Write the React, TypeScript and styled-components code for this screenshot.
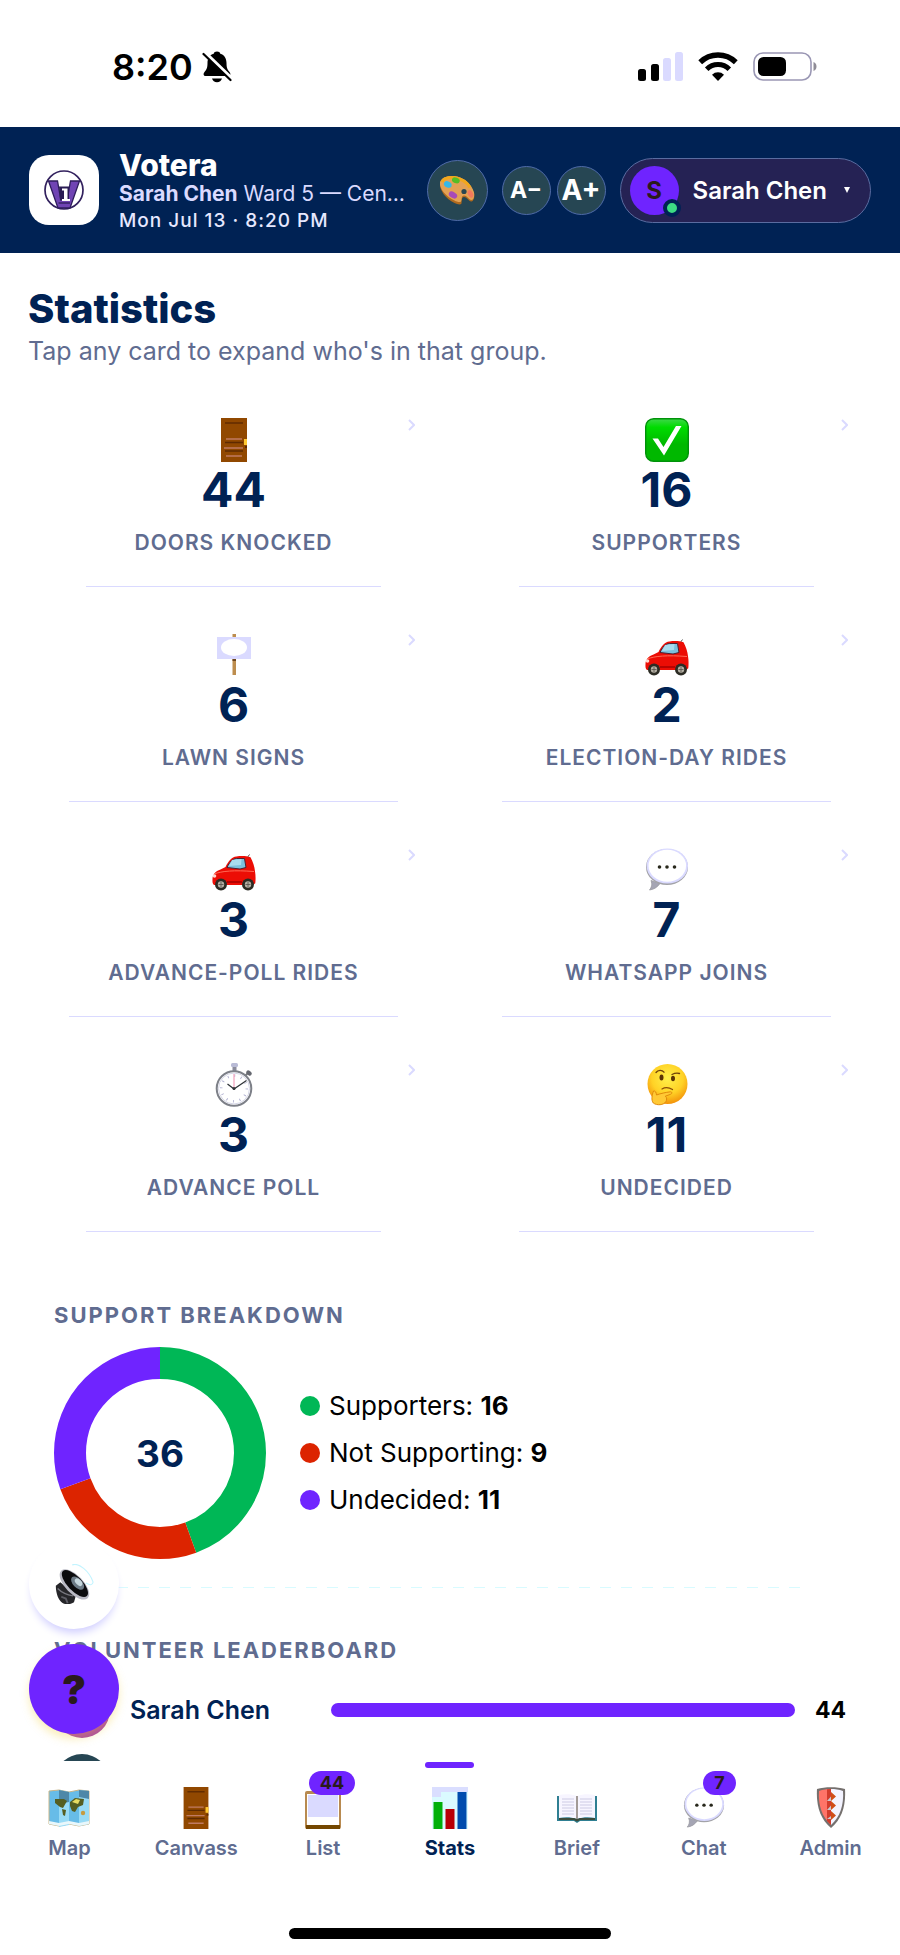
import React from "react";
import styled, { createGlobalStyle } from "styled-components";

const GlobalStyle = createGlobalStyle`
  :root {
    --navy: #002254;
    --violet: #6f24ff;
    --muted: #606c90;
    --lavender: #dadaff;
    --ink: #2a1a1c;
    --slate: #264653;
  }

  * {
    box-sizing: border-box;
  }

  body {
    margin: 0;
    background: white;
    font-family: Inter, "Liberation Sans", sans-serif;
  }

  button {
    font-family: inherit;
    padding: 0;
    border: none;
    background: none;
    cursor: pointer;
  }

  svg {
    display: block;
    flex-shrink: 0;
  }
`;

const Shell = styled.div`
  height: 100vh;
  display: flex;
  flex-direction: column;
  overflow: hidden;
`;

const StatusBar = styled.div`
  display: flex;
  align-items: center;
  justify-content: space-between;
  flex-shrink: 0;
  height: 127px;
  padding: 6px 82px 0 112px;
`;

const StatusGroup = styled.div<{ $gap: number }>`
  display: flex;
  align-items: center;
  gap: ${props => props.$gap}px;
`;

const Clock = styled.span`
  font-size: 36px;
  font-weight: 600;
  line-height: 40px;
`;

const Header = styled.header`
  display: flex;
  align-items: center;
  flex-shrink: 0;
  height: 126px;
  padding: 0 29px;
  background: var(--navy);
  color: white;
`;

const LogoTile = styled.div`
  display: flex;
  align-items: center;
  justify-content: center;
  flex-shrink: 0;
  width: 70px;
  height: 70px;
  border-radius: 20px;
  background: white;
`;

const Identity = styled.div`
  flex: 1;
  min-width: 0;
  padding: 3px 0 0 20px;
  white-space: nowrap;
`;

const AppName = styled.div`
  font-size: 30px;
  font-weight: 800;
  line-height: 30px;
`;

const Assignment = styled.div`
  font-size: 21px;
  line-height: 28px;
  color: var(--lavender);
`;

const DateLine = styled.div`
  font-size: 19px;
  font-weight: 500;
  line-height: 26px;
  letter-spacing: 1px;
  color: #e6e8ff;
`;

const RoundButton = styled.button<{ $size: number; $font?: number }>`
  display: flex;
  align-items: center;
  justify-content: center;
  flex-shrink: 0;
  width: ${props => props.$size}px;
  height: ${props => props.$size}px;
  border: 1px solid #4f6ba8;
  border-radius: 50%;
  background: var(--slate);
  color: white;
  font-size: ${props => props.$font || 20}px;
  font-weight: 700;
`;

const HeaderTools = styled.div`
  display: flex;
  align-items: center;
  gap: 14px;
`;

const FontSizeTools = styled.div`
  display: flex;
  gap: 6px;
`;

const ProfileButton = styled.button`
  display: flex;
  align-items: center;
  height: 65px;
  padding: 0 20px 0 9px;
  border: 1px solid #5a6ca0;
  border-radius: 33px;
  background: #252254;
  color: white;
  font-size: 24px;
  font-weight: 600;
  white-space: nowrap;
`;

const Avatar = styled.span`
  position: relative;
  display: flex;
  align-items: center;
  justify-content: center;
  width: 49px;
  height: 49px;
  margin-right: 14px;
  border-radius: 50%;
  background: var(--violet);
  color: var(--ink);
  font-weight: 700;
`;

const OnlineDot = styled.span`
  position: absolute;
  right: -2px;
  bottom: -2px;
  width: 18px;
  height: 18px;
  border: 4px solid var(--navy);
  border-radius: 50%;
  background: #3ddc84;
`;

const Caret = styled.span`
  width: 6px;
  height: 6px;
  margin-left: 17px;
  background: white;
  clip-path: polygon(0 0, 100% 0, 50% 100%);
`;

const Main = styled.main`
  flex: 1;
  min-height: 0;
  padding: 32px 28px 0;
  overflow-y: auto;
  scrollbar-width: none;
`;

const Title = styled.h1`
  margin: 0;
  font-size: 40px;
  font-weight: 800;
  line-height: 48px;
  color: var(--navy);
`;

const Subtitle = styled.p`
  margin: 2px 0 27px;
  font-size: 25px;
  line-height: 32px;
  color: var(--muted);
`;

const CardGrid = styled.div`
  display: grid;
  grid-template-columns: 1fr 1fr;
  gap: 22px;
`;

const Card = styled.button`
  position: relative;
  display: flex;
  flex-direction: column;
  align-items: center;
  padding-top: 24px;
`;

const Chevron = styled.svg`
  position: absolute;
  top: 25px;
  right: 24px;
`;

const CardValue = styled.span`
  margin-top: 2px;
  font-size: 48px;
  font-weight: 700;
  line-height: 52px;
  color: var(--navy);
`;

const CardLabel = styled.span`
  margin-top: 15px;
  font-size: 21px;
  font-weight: 600;
  line-height: 24px;
  letter-spacing: 1px;
  text-transform: uppercase;
  color: var(--muted);
`;

const CardRule = styled.span<{ $wide?: boolean }>`
  width: ${props => props.$wide ? "80%" : "72%"};
  height: 1px;
  margin-top: 31px;
  background: var(--lavender);
`;

const Panel = styled.section<{ $top: number }>`
  margin-top: ${props => props.$top}px;
  padding: 26px 26px 28px;
`;

const PanelDivider = styled.div`
  height: 1px;
  margin: 0 72px 0 26px;
  background: repeating-linear-gradient(to right, #d8fbff 0 11px, transparent 11px 21px);
`;

const PanelTitle = styled.h2`
  margin: 0 0 18px;
  font-size: 22px;
  font-weight: 700;
  line-height: 28px;
  letter-spacing: 2px;
  text-transform: uppercase;
  color: var(--muted);
`;

const Breakdown = styled.div`
  display: flex;
  align-items: center;
  gap: 34px;
`;

const Legend = styled.ul`
  display: grid;
  gap: 15px;
  margin: 0;
  padding: 0;
  list-style: none;
`;

const LegendItem = styled.li<{ $color: string }>`
  display: flex;
  align-items: center;
  gap: 9px;
  font-size: 26px;
  line-height: 32px;

  &::before {
    content: "";
    width: 20px;
    height: 20px;
    border-radius: 50%;
    background: ${props => props.$color};
  }
`;

const LeaderRow = styled.div`
  display: flex;
  align-items: center;
  gap: 20px;
  height: 56px;
  margin-bottom: 16px;
`;

const Rank = styled.span<{ $color: string }>`
  flex-shrink: 0;
  width: 56px;
  height: 56px;
  border-radius: 50%;
  background: ${props => props.$color};
`;

const LeaderName = styled.span`
  width: 181px;
  font-size: 25px;
  font-weight: 600;
  color: var(--navy);
`;

const Track = styled.div`
  flex: 1;
  height: 14px;
`;

const Fill = styled.div`
  height: 100%;
  border-radius: 7px;
  background: var(--violet);
`;

const LeaderCount = styled.span`
  font-size: 23px;
  font-weight: 700;
`;

const BottomArea = styled.footer`
  position: relative;
  flex-shrink: 0;
  background: white;
`;

const FloatingActions = styled.div`
  position: absolute;
  left: 29px;
  bottom: 100%;
  display: grid;
  gap: 15px;
  padding-bottom: 27px;
`;

const FloatingButton = styled.button<{ $primary?: boolean }>`
  display: flex;
  align-items: center;
  justify-content: center;
  width: 90px;
  height: 90px;
  border-radius: 50%;
  background: ${props => props.$primary ? "var(--violet)" : "white"};
  box-shadow: ${props => props.$primary ? "0 5px 8px rgba(240, 205, 60, 0.35)" : "0 7px 8px -3px #d0ceff"};
  color: var(--ink);
  font-size: 40px;
  font-weight: 900;
`;

const Tabs = styled.nav`
  display: grid;
  grid-template-columns: repeat(7, 1fr);
  padding: 1px 6px 0;
`;

const Tab = styled.button<{ $active?: boolean }>`
  display: flex;
  flex-direction: column;
  align-items: center;
  font-size: 20px;
  font-weight: ${props => props.$active ? 700 : 600};
  line-height: 24px;
  color: ${props => props.$active ? "var(--navy)" : "var(--muted)"};

  &::before {
    content: "";
    width: 49px;
    height: 6px;
    border-radius: 3px;
    background: ${props => props.$active ? "var(--violet)" : "transparent"};
  }
`;

const TabIcon = styled.span`
  position: relative;
  margin: 19px 0 7px;
`;

const Badge = styled.span`
  position: absolute;
  top: -16px;
  right: -11px;
  min-width: 32px;
  padding: 0 11px;
  border-radius: 12px;
  background: var(--violet);
  color: var(--ink);
  font-size: 18px;
  font-weight: 700;
  line-height: 24px;
`;

const HomeIndicator = styled.div`
  width: 322px;
  height: 11px;
  margin: 68px auto 16px;
  border-radius: 6px;
  background: black;
`;

type IconProps = { size: number };

const DoorIcon = ({ size }: IconProps) => (
  <svg width={size} height={size} viewBox="0 0 44 44">
    <rect x="9" width="26" height="44" fill="#914800" />
    <path d="M13 5h18" stroke="#5e2a00" strokeWidth="1.4" />
    <path d="M14 21h16M12 30h19M14 38h16" stroke="#c07a62" strokeWidth="1.4" />
    <path d="M13 24.500h18M13 33h18" stroke="#5e2a00" strokeWidth="1.4" />
    <rect x="32" y="21" width="3" height="6" fill="#ffc933" />
    <rect x="33" y="28" width="2" height="2" fill="#5e2a00" />
  </svg>
);

const CheckIcon = ({ size }: IconProps) => (
  <svg width={size} height={size} viewBox="0 0 44 44">
    <defs>
      <linearGradient id="check-bg" x2="0" y2="1">
        <stop offset="0" stopColor="#3fd84a" />
        <stop offset="0.2" stopColor="#00dc00" />
        <stop offset="0.6" stopColor="#00b800" />
      </linearGradient>
    </defs>
    <rect x="0.700" y="0.700" width="42.600" height="42.600" rx="8" fill="url(#check-bg)" stroke="#00920a" strokeWidth="1.4" />
    <path d="M7.500 20.500h5.500l5.500 8.500L31 8h5.500L19 37.500z" fill="white" />
  </svg>
);

const SignIcon = ({ size }: IconProps) => (
  <svg width={size} height={size} viewBox="0 0 44 44">
    <rect x="20.500" y="1" width="3.500" height="41" fill="#bd8d4e" />
    <rect x="5" y="4" width="34" height="22" fill="#dadaff" />
    <ellipse cx="22" cy="14.500" rx="13" ry="8.500" fill="white" />
    <path d="M20.500 26h3.500v2h-3.500z" fill="#6b4520" />
  </svg>
);

const CarIcon = ({ size }: IconProps) => (
  <svg width={size} height={size} viewBox="0 0 44 44">
    <path d="M35 10l2.500-3.500" stroke="#555" strokeWidth="1" />
    <path d="M0.500 31c0-4 3-8 8-9.500l5-2.500c3-6 6-10 11-10.500 5-.7 10-.5 14 .8 2.500 5 4 9 4.500 14 .7 4 .7 8 .3 12L41 37H2c-1.500-1-1.700-3-1.500-6z" fill="#ec0d05" />
    <path d="M15 19.500c2.500-5.500 5.500-8.500 9.500-9h8l1.500 9-6 1.500z" fill="#7cc0dc" stroke="#4a2030" strokeWidth="1" />
    <path d="M20 12l-3 6 12-1 .5-6z" fill="#a9dcee" />
    <path d="M2 26c8-3 20-4 40-2.500" fill="none" stroke="#ff6a55" strokeWidth="1" />
    <path d="M15 34h15" stroke="#a60000" strokeWidth="1.500" />
    <circle cx="2.500" cy="28" r="1.800" fill="#ffd9d0" />
    <circle cx="9" cy="36.500" r="6" fill="#2c2c24" />
    <circle cx="9" cy="36.500" r="3.200" fill="#b4b0a4" />
    <circle cx="36" cy="36.500" r="6" fill="#2c2c24" />
    <circle cx="36" cy="36.500" r="3.200" fill="#b4b0a4" />
    <path d="M9 34v5M6.500 36.500h5M36 34v5M33.500 36.500h5" stroke="#55504a" strokeWidth="0.800" />
  </svg>
);

const ChatIcon = ({ size }: IconProps) => (
  <svg width={size} height={size} viewBox="0 0 44 44">
    <path d="M6 32.500c1.500 4 .5 7-1.500 9.500 4.500-.5 8-3 10.500-6.500z" fill="#a5a5b4" stroke="#99999f" strokeWidth="0.800" />
    <ellipse cx="22" cy="19" rx="21" ry="18" fill="#a3a3a8" />
    <ellipse cx="22.300" cy="18" rx="20.700" ry="17.600" fill="#dadaff" />
    <ellipse cx="22.300" cy="17.700" rx="18.800" ry="16" fill="white" />
    <circle cx="14.500" cy="19" r="1.800" fill="#28281c" />
    <circle cx="22" cy="19" r="1.800" fill="#28281c" />
    <circle cx="29.500" cy="19" r="1.800" fill="#28281c" />
  </svg>
);

const StopwatchIcon = ({ size }: IconProps) => (
  <svg width={size} height={size} viewBox="0 0 44 44">
    <rect x="19" y="0" width="7" height="4" rx="1.500" fill="#b9bbd6" />
    <rect x="20.500" y="4" width="4" height="4" fill="#8b8c9c" />
    <path d="M33 13l4-4" stroke="#77787c" strokeWidth="2" />
    <rect x="34" y="8" width="6" height="4" rx="2" transform="rotate(40 37 10)" fill="#666870" />
    <circle cx="22" cy="25.500" r="17.300" fill="white" stroke="#7d8088" strokeWidth="2" />
    <circle cx="22" cy="25.500" r="15.500" fill="none" stroke="#d5d6e6" strokeWidth="1" />
    <circle cx="22" cy="25.500" r="12.800" fill="none" stroke="#b2b2d2" strokeWidth="2.600" strokeDasharray="0.900 5.800" />
    <path d="M22 11v15" stroke="#f4a0bd" strokeWidth="1.200" />
    <path d="M15.500 21l6.500 5 12.500-8.500" fill="none" stroke="#303438" strokeWidth="1.300" />
    <circle cx="22" cy="25.500" r="1.500" fill="#303438" />
  </svg>
);

const ThinkingIcon = ({ size }: IconProps) => (
  <svg width={size} height={size} viewBox="0 0 44 44">
    <defs>
      <radialGradient id="face" cx="0.500" cy="0.350" r="0.650">
        <stop offset="0" stopColor="#fff04a" />
        <stop offset="0.600" stopColor="#ffd226" />
        <stop offset="1" stopColor="#f3920a" />
      </radialGradient>
    </defs>
    <circle cx="22.500" cy="21" r="20" fill="url(#face)" />
    <path d="M11 9.500c2-2.800 6-3 8-.3M27 11.500c2.500-1.300 5-1.700 7.500-1" fill="none" stroke="#70420a" strokeWidth="1.300" strokeLinecap="round" />
    <ellipse cx="16.500" cy="14.500" rx="2" ry="3" fill="#5c3304" />
    <ellipse cx="28" cy="15.500" rx="2" ry="2.800" fill="#5c3304" />
    <path d="M17 26c3-1.800 7-1.600 10.500.6" fill="none" stroke="#8a4c08" strokeWidth="1.200" strokeLinecap="round" />
    <path d="M8.500 28c2-.5 2.700 1.500 3 4 4-1.500 9-2.600 14-3.200 2 .3 1.700 2-.2 2.600l-5 1.800c2 1.500 1.500 4 .5 5.500-2 3.500-9 4-12.500 1.300C6 37 7 32 8.500 28z" fill="#ffc935" stroke="#e08a0a" strokeWidth="1" />
  </svg>
);

const PaletteIcon = ({ size }: IconProps) => (
  <svg width={size} height={size} viewBox="0 0 36 36">
    <path d="M1 11C2 6 8 4 15 4.500c9 .8 18 8 20 16.500 1 4-.5 8.500-2.500 8.500-3 .2-4-4.500-7.500-4.500-3 .2-2 4.500-2.500 6.500-1 1.500-4 1-7-.5C7 27 0 18 1 11z" fill="#b06a1e" />
    <path d="M1 10.500C2 5.500 8 3.500 15 4c9 .8 18 8 20 16.500.7 4-.5 7.500-2.500 7.500-3 0-4-4.500-7.500-4.500-3 .2-2 4.500-3 6-1 1-4 .5-6.500-1C8 25 0 17 1 10.500z" fill="#e3a155" />
    <path d="M3 10C5 6 9 5 15 5.500c7 1 13 5 16 10" fill="none" stroke="#f2a71c" strokeWidth="3" />
    <ellipse cx="9" cy="12.500" rx="4" ry="3" transform="rotate(25 9 12)" fill="#35b8e8" />
    <ellipse cx="17" cy="8.500" rx="4" ry="2.800" transform="rotate(20 17 8)" fill="#55be26" />
    <ellipse cx="14" cy="23" rx="4.500" ry="3" transform="rotate(30 14 23)" fill="#a84ab8" />
    <ellipse cx="31.500" cy="22" rx="2.500" ry="4" transform="rotate(-25 31 22)" fill="#f2795c" />
    <circle cx="25" cy="19.500" r="2.600" fill="#2a4650" />
  </svg>
);

const SpeakerIcon = ({ size }: IconProps) => (
  <svg width={size} height={size} viewBox="0 0 44 44">
    <path d="M2 24l5-4 17 15-2 7c-4 3-10 3-13 .5-4-2.500-7-10-7-18.500z" fill="#26262a" />
    <path d="M4 27c5 5 10 7 17 8" fill="none" stroke="#77777f" strokeWidth="1.500" />
    <path d="M8 36l5 2 2 5" fill="none" stroke="#5e5e66" strokeWidth="2" />
    <ellipse cx="22.500" cy="22.500" rx="21" ry="10" transform="rotate(46 22.500 22.500)" fill="#b9b9c4" />
    <ellipse cx="23" cy="21.500" rx="19" ry="8" transform="rotate(46 23 21.500)" fill="#0b0b0e" />
    <ellipse cx="26" cy="21" rx="9" ry="5" transform="rotate(46 26 21)" fill="#6c7a86" />
    <ellipse cx="27" cy="20" rx="5" ry="3" transform="rotate(46 27 20)" fill="#c5d6dd" />
    <path d="M20 1c7-3 19 7 23 19-1 5-5 2-8 1" fill="none" stroke="#c3f4ff" strokeWidth="1.200" />
  </svg>
);

const MapIcon = ({ size }: IconProps) => (
  <svg width={size} height={size} viewBox="0 0 42 42">
    <path d="M1 4l10-1 10 2 10-2 10 1v33l-10 2-10-2-10 2-10-2z" fill="#67bce8" stroke="#c8b68a" strokeWidth="1" />
    <path d="M11 3l10 2v33l-10 2zM31 3l10 1v33l-10 2z" fill="#98dbf6" />
    <path d="M11 3l10 2v10l-10 2zM31 3l10 1v8l-10-2z" fill="#4e88a8" />
    <path d="M7 12l9 0 3 2-4 7-3-1-5-4zM14 22l4 1-1 6-2-1zM22 15l5-4 9 1-1 6-5 2-3 5-3-1-2-5z" fill="#555e21" />
    <path d="M24 15l4-3 4 1-2 4z" fill="#e7dc62" />
    <circle cx="35" cy="26" r="2.200" fill="#c69b40" />
    <path d="M1 34l10 2 10-2 10 2 10-2v3l-10 2-10-2-10 2-10-2z" fill="#e9f7fb" />
  </svg>
);

const ClipboardIcon = ({ size }: IconProps) => (
  <svg width={size} height={size} viewBox="0 0 42 42">
    <rect x="3" y="4" width="36" height="38" rx="2" fill="#b88a50" />
    <path d="M4 38h34v4H4z" fill="#744700" />
    <rect x="5" y="7" width="32" height="31" fill="white" />
    <rect x="6" y="8" width="30" height="22" fill="#dadaff" />
  </svg>
);

const ChartIcon = ({ size }: IconProps) => (
  <svg width={size} height={size} viewBox="0 0 42 42">
    <rect x="3" width="36" height="42" fill="#dafaff" />
    <path d="M3 0h36v5H12v5H3z" fill="#dadeff" />
    <rect x="4.500" y="15" width="9" height="27" fill="#00b00a" />
    <rect x="16.500" y="22" width="9" height="20" fill="#b80006" />
    <rect x="28.500" y="5" width="9" height="37" fill="#004cae" />
  </svg>
);

const BookIcon = ({ size }: IconProps) => (
  <svg width={size} height={size} viewBox="0 0 42 42">
    <path d="M1 9h40v25H24l-3 2-3-2H1z" fill="#2f7f92" />
    <path d="M3 8c6-1 12-1 18 1 6-2 12-2 18-1v23c-6-1-12-1-18 1-6-2-12-2-18-1z" fill="#f7f5ff" />
    <path d="M6 12h12M6 15h12M6 18h12M6 21h12M6 24h12M6 27h12M24 12h12M24 15h12M24 18h12M24 21h12M24 24h12M24 27h12" stroke="#cdcbe4" strokeWidth="1" />
    <path d="M21 9v24" stroke="#877c74" strokeWidth="1.500" />
    <path d="M3 32h15l3 1.500 3-1.500h15" fill="none" stroke="#3c4c3c" strokeWidth="2" />
  </svg>
);

const ShieldIcon = ({ size }: IconProps) => (
  <svg width={size} height={size} viewBox="0 0 42 42">
    <path d="M7 2c8-2.500 20-2.500 28 0 1 16-3 30-14 39C10 32 6 18 7 2z" fill="#75706e" />
    <path d="M9 4c4-1.500 8-2 12-2v36C12 30 8 18 9 4z" fill="#ff7468" />
    <path d="M17 2.300l4-.3v36l-4-4z" fill="#d23c2c" />
    <path d="M21 2c4 0 8 .5 12 2 1 14-3 26-12 34z" fill="#f3f3ff" />
    <path d="M21 5l5 4.500-5 4.500zM21 14l5 4.500-5 4.500zM21 24l5 4.500-5 4.500z" fill="#d04e18" />
    <path d="M21 9.500l-4 4.500 4 0zM21 18.500l-4 4.500 4 0zM21 29l-4 3 4 0z" fill="#c9c9d0" />
  </svg>
);

const VoteraLogo = () => (
  <svg width="40" height="40" viewBox="0 0 40 40">
    <circle cx="20" cy="20" r="19" fill="white" stroke="#32215e" strokeWidth="1.700" />
    <path d="M4.500 11h9l3 17h7l3-17h9L26 38H14z" fill="#7044b4" stroke="#2e1d5c" strokeWidth="1.300" />
    <path d="M15 16.500h10v14h-9z" fill="#2a1c54" />
    <path d="M18 18.500h5.500V29H26v2h-8v-2h2V20.500h-2z" fill="white" />
    <path d="M14.500 33h11.500" stroke="#2e1d5c" strokeWidth="1.300" />
  </svg>
);

const MutedBell = () => (
  <svg width="30" height="32" viewBox="0 0 30 32">
    <path d="M15 0.500c1.800 0 3 .9 3.300 2.200 4.200 1.300 6.200 4.800 6.200 9.300 0 4.500.8 6.500 3 9 1.600 1.900 1 4-1.200 4H3.700c-2.200 0-2.800-2.100-1.200-4 2.200-2.500 3-4.500 3-9 0-4.500 2-8 6.200-9.300C12 1.400 13.200.5 15 .5zM10 27.500h10c-.7 2.300-2.500 3.700-5 3.700s-4.300-1.400-5-3.700z" fill="black" />
    <path d="M2.500 1.500l27 26" stroke="white" strokeWidth="4" />
    <path d="M1.500 3l27 26" stroke="black" strokeWidth="2.200" strokeLinecap="round" />
  </svg>
);

const SignalIcon = () => (
  <svg width="45" height="29" viewBox="0 0 45 29">
    <rect y="17" width="8" height="12" rx="2.500" fill="black" />
    <rect x="13" y="12" width="8" height="17" rx="2.500" fill="black" />
    <rect x="25" y="6" width="8" height="23" rx="2.500" fill="#dadaff" />
    <rect x="37" width="8" height="29" rx="2.500" fill="#dadaff" />
  </svg>
);

const WifiIcon = () => (
  <svg width="40" height="29" viewBox="0 0 40 29">
    <path d="M2.200 10.300a25.500 25.500 0 0 1 35.600 0" fill="none" stroke="black" strokeWidth="5.400" />
    <path d="M8.700 17.200a16 16 0 0 1 22.600 0" fill="none" stroke="black" strokeWidth="5" />
    <path d="M20 29l-6-6.300a8.800 8.800 0 0 1 12 0z" fill="black" />
  </svg>
);

const BatteryIcon = () => (
  <svg width="65" height="29" viewBox="0 0 65 29">
    <rect x="1" y="1" width="57" height="27" rx="9" fill="none" stroke="#9a97b4" strokeWidth="1.600" />
    <rect x="5" y="5" width="28" height="19" rx="5.500" fill="black" />
    <path d="M60.500 10c4 1.500 4 7.500 0 9z" fill="#8f8c96" />
  </svg>
);

const stats = [
  { label: "Doors knocked", value: 44, icon: DoorIcon },
  { label: "Supporters", value: 16, icon: CheckIcon },
  { label: "Lawn signs", value: 6, icon: SignIcon, wide: true },
  { label: "Election-day rides", value: 2, icon: CarIcon, wide: true },
  { label: "Advance-poll rides", value: 3, icon: CarIcon, wide: true },
  { label: "WhatsApp joins", value: 7, icon: ChatIcon, wide: true },
  { label: "Advance poll", value: 3, icon: StopwatchIcon },
  { label: "Undecided", value: 11, icon: ThinkingIcon },
];

const support = [
  { label: "Supporters", count: 16, color: "#00b756" },
  { label: "Not Supporting", count: 9, color: "#dc2400" },
  { label: "Undecided", count: 11, color: "#6f24ff" },
];

const leaders = [{ name: "Sarah Chen", doors: 44 }];

const tabs = [
  { label: "Map", icon: MapIcon },
  { label: "Canvass", icon: DoorIcon },
  { label: "List", icon: ClipboardIcon, badge: 44 },
  { label: "Stats", icon: ChartIcon },
  { label: "Brief", icon: BookIcon },
  { label: "Chat", icon: ChatIcon, badge: 7 },
  { label: "Admin", icon: ShieldIcon },
];

function Donut() {
  const total = support.reduce((sum, slice) => sum + slice.count, 0);
  let start = 0;

  return (
    <svg width="212" height="212" viewBox="0 0 212 212" role="img" aria-label="Support breakdown">
      {support.map(slice => {
        const share = slice.count / total * 100;
        const offset = -start;
        start += share;
        return (
          <circle
            key={slice.label}
            cx="106"
            cy="106"
            r="90"
            fill="none"
            stroke={slice.color}
            strokeWidth="32"
            pathLength="100"
            strokeDasharray={`${share} ${100 - share}`}
            strokeDashoffset={offset}
            transform="rotate(-90 106 106)"
          />
        );
      })}
      <text x="106" y="120" textAnchor="middle" fontSize="37" fontWeight="700" fill="#002254">{total}</text>
    </svg>
  );
}

export default function App() {
  const [activeTab, setActiveTab] = React.useState("Stats");
  const topCount = Math.max(...leaders.map(leader => leader.doors));

  return <Shell>
    <GlobalStyle />
    <StatusBar>
      <StatusGroup $gap={9}>
        <Clock>8:20</Clock>
        <MutedBell />
      </StatusGroup>
      <StatusGroup $gap={15}>
        <SignalIcon />
        <WifiIcon />
        <BatteryIcon />
      </StatusGroup>
    </StatusBar>
    <Header>
      <LogoTile><VoteraLogo /></LogoTile>
      <Identity>
        <AppName>Votera</AppName>
        <Assignment><strong>Sarah Chen</strong> Ward 5 — Cen…</Assignment>
        <DateLine>Mon Jul 13 · 8:20 PM</DateLine>
      </Identity>
      <HeaderTools>
        <RoundButton $size={61} aria-label="Theme"><PaletteIcon size={36} /></RoundButton>
        <FontSizeTools>
          <RoundButton $size={49} $font={23}>A−</RoundButton>
          <RoundButton $size={49} $font={28}>A+</RoundButton>
        </FontSizeTools>
        <ProfileButton>
          <Avatar>S<OnlineDot /></Avatar>
          Sarah Chen
          <Caret />
        </ProfileButton>
      </HeaderTools>
    </Header>
    <Main>
      <Title>Statistics</Title>
      <Subtitle>Tap any card to expand who's in that group.</Subtitle>
      <CardGrid>
        {stats.map(({ label, value, icon: Icon, wide }) => (
          <Card key={label}>
            <Chevron width="7" height="12" viewBox="0 0 7 12">
              <path d="M1 1l5 5-5 5" fill="none" stroke="#dadaff" strokeWidth="2" />
            </Chevron>
            <Icon size={44} />
            <CardValue>{value}</CardValue>
            <CardLabel>{label}</CardLabel>
            <CardRule $wide={wide} />
          </Card>
        ))}
      </CardGrid>
      <Panel $top={43}>
        <PanelTitle>Support breakdown</PanelTitle>
        <Breakdown>
          <Donut />
          <Legend>
            {support.map(slice => (
              <LegendItem key={slice.label} $color={slice.color}>
                <span>{slice.label}: <strong>{slice.count}</strong></span>
              </LegendItem>
            ))}
          </Legend>
        </Breakdown>
      </Panel>
      <PanelDivider />
      <Panel $top={22}>
        <PanelTitle>Volunteer leaderboard</PanelTitle>
        {leaders.map(leader => (
          <LeaderRow key={leader.name}>
            <Rank $color="#a63fa8" />
            <LeaderName>{leader.name}</LeaderName>
            <Track>
              <Fill style={{ width: `${leader.doors / topCount * 100}%` }} />
            </Track>
            <LeaderCount>{leader.doors}</LeaderCount>
          </LeaderRow>
        ))}
        <LeaderRow>
          <Rank $color="var(--slate)" />
        </LeaderRow>
      </Panel>
    </Main>
    <BottomArea>
      <FloatingActions>
        <FloatingButton aria-label="Read aloud"><SpeakerIcon size={40} /></FloatingButton>
        <FloatingButton $primary>?</FloatingButton>
      </FloatingActions>
      <Tabs>
        {tabs.map(({ label, icon: Icon, badge }) => (
          <Tab key={label} $active={label === activeTab} onClick={() => setActiveTab(label)}>
            <TabIcon>
              <Icon size={42} />
              {badge && <Badge>{badge}</Badge>}
            </TabIcon>
            {label}
          </Tab>
        ))}
      </Tabs>
      <HomeIndicator />
    </BottomArea>
  </Shell>
}
